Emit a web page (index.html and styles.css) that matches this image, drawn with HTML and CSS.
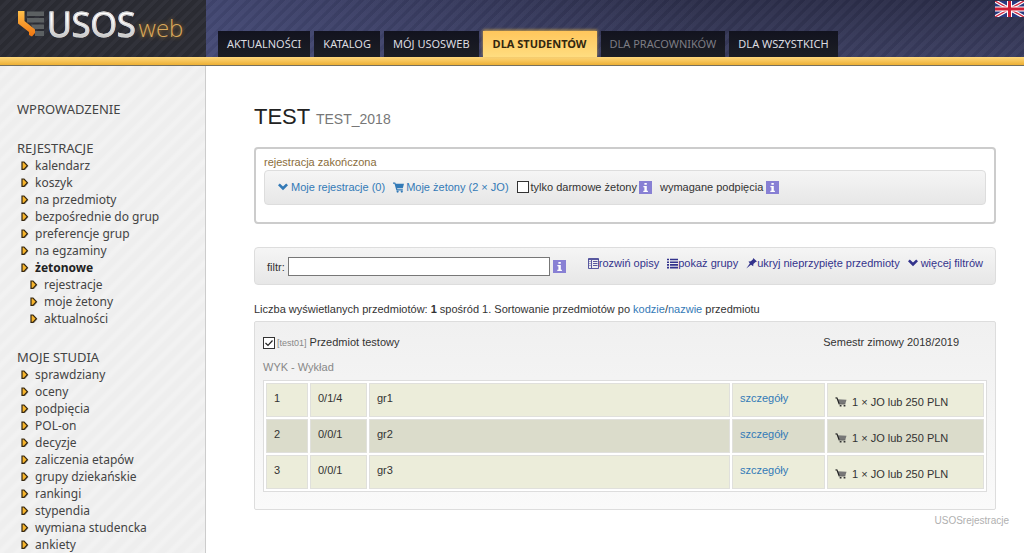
FILE: index.html
```html
<!DOCTYPE html>
<html lang="pl">
<head>
<meta charset="utf-8">
<title>USOSweb – TEST</title>
<link rel="stylesheet" href="styles.css">
</head>
<body>
<svg class="defs" aria-hidden="true">
  <defs>
    <linearGradient id="orange" x1="0" y1="0" x2="0" y2="1"><stop offset="0" stop-color="#ffc04a"/><stop offset="1" stop-color="#ef7410"/></linearGradient>
    <symbol id="chevron" viewBox="0 0 10 8"><path d="M0 2.2 1.8.5 5 3.6 8.2.5 10 2.2 5 7.2Z" fill="currentColor"/></symbol>
    <symbol id="cart" viewBox="0 0 11 11"><path d="M0 .5h2.2l.6 1.3H11L9.8 6.2H4.1l.3 1.1h5.4v1.1H3.4L1.5 1.7H0Z" fill="currentColor"/><circle cx="4.6" cy="9.6" r="1.1" fill="currentColor"/><circle cx="8.8" cy="9.6" r="1.1" fill="currentColor"/></symbol>
    <symbol id="cart-gray" viewBox="0 0 12 10"><path d="M2.6 2.2 11.5 2.8 10.200 7H4.2Z" fill="#777"/><path d="M.5.8 2 1l2.300 6.200" fill="none" stroke="#222" stroke-width="1.2"/><path d="M4 7h6.300" stroke="#666" stroke-width="1"/><path d="M4.7 8h1.8v1.6H4.7zM8.6 8h1.8v1.6H8.6z" fill="#333"/></symbol>
    <symbol id="details" viewBox="0 0 11 11"><path d="M.5.5h10v10H.5zM.5 1.5h10M3.5 2v8M5 3.5h4.5M5 5.5h4.5M5 7.5h4.5M1.5 3.5h1M1.5 5.5h1M1.5 7.5h1" fill="none" stroke="currentColor" stroke-opacity=".8"/></symbol>
    <symbol id="list" viewBox="0 0 11 10"><path d="M0 1h2M3 1h8M0 3.7h2M3 3.7h8M0 6.4h2M3 6.4h8M0 9.1h2M3 9.1h8" fill="none" stroke="currentColor" stroke-width="1.6"/></symbol>
    <symbol id="pin" viewBox="0 0 11 11"><path d="M7.2 0 11 3.6 9.6 4 7.4 6 7.2 8.3 5 6.7.3 10.6 3.8 5.5 2.5 3.5l2.4-.2L7 1.3Z" fill="currentColor"/></symbol>
    <symbol id="arrow" viewBox="0 0 8 10"><path d="M2 1.8h2.4L7.6 5 4.4 9H2Z" fill="#000" opacity=".25"/><path d="M1 1h2L6.4 4.7 3 8.4H1Z" fill="#f7b52c" stroke="#33250f" stroke-width="1.2"/></symbol>
    <symbol id="info" viewBox="0 0 13 13"><path d="M0 0h13v13H0z" fill="#8880d4"/><path d="M5.4 2h2.4v1.8H5.4zM4.4 5h3.4v4.8h1.1V11H4.3V9.8h1.1V6.2h-1z" fill="#fff"/></symbol>
  </defs>
</svg>

<header class="top">
  <a class="logo" href="#" aria-label="USOSweb">
    <svg class="logo-mark" viewBox="0 0 26 26" aria-hidden="true">
      <path d="M9 .5h17v4.500H9zM9 7h17v4.500H9zM13 13.500h13v4.500H15zM17 20h9v5h-9z" fill="#5c6062"/>
      <path d="M0 0h6.500v10L17 18.500V22l-3 3.500L11 24v-3L0 12.500Z" fill="url(#orange)"/>
    </svg>
    <span class="logo-usos">USOS</span><span class="logo-web">web</span>
  </a>
  <div class="top-right">
    <nav class="tabs">
      <a class="tab" href="#">AKTUALNOŚCI</a>
      <a class="tab" href="#">KATALOG</a>
      <a class="tab" href="#">MÓJ USOSWEB</a>
      <a class="tab tab-active" href="#">DLA STUDENTÓW</a>
      <a class="tab tab-muted" href="#">DLA PRACOWNIKÓW</a>
      <a class="tab" href="#">DLA WSZYSTKICH</a>
    </nav>
    <a class="flag" href="#" aria-label="English">
      <svg viewBox="0 0 29 16" aria-hidden="true">
        <path d="M0 0h29v16H0z" fill="#283a80"/>
        <path d="M0 0 29 16M29 0 0 16" stroke="#fff" stroke-width="3.600"/>
        <path d="M0 0 29 16M29 0 0 16" stroke="#d02840" stroke-width="1.300"/>
        <path d="M14.500 0v16M0 8h29" stroke="#fff" stroke-width="5"/>
        <path d="M14.500 0v16M0 8h29" stroke="#d01f35" stroke-width="3"/>
      </svg>
    </a>
  </div>
</header>

<div class="page">
  <nav class="sidebar">
    <section><a class="side-title" href="#">WPROWADZENIE</a></section>
    <section>
      <div class="side-title">REJESTRACJE</div>
      <ul>
        <li><svg><use href="#arrow"/></svg><a href="#">kalendarz</a></li>
        <li><svg><use href="#arrow"/></svg><a href="#">koszyk</a></li>
        <li><svg><use href="#arrow"/></svg><a href="#">na przedmioty</a></li>
        <li><svg><use href="#arrow"/></svg><a href="#">bezpośrednie do grup</a></li>
        <li><svg><use href="#arrow"/></svg><a href="#">preferencje grup</a></li>
        <li><svg><use href="#arrow"/></svg><a href="#">na egzaminy</a></li>
        <li class="current"><svg><use href="#arrow"/></svg><a href="#">żetonowe</a></li>
        <li class="sub"><svg><use href="#arrow"/></svg><a href="#">rejestracje</a></li>
        <li class="sub"><svg><use href="#arrow"/></svg><a href="#">moje żetony</a></li>
        <li class="sub"><svg><use href="#arrow"/></svg><a href="#">aktualności</a></li>
      </ul>
    </section>
    <section>
      <div class="side-title">MOJE STUDIA</div>
      <ul>
        <li><svg><use href="#arrow"/></svg><a href="#">sprawdziany</a></li>
        <li><svg><use href="#arrow"/></svg><a href="#">oceny</a></li>
        <li><svg><use href="#arrow"/></svg><a href="#">podpięcia</a></li>
        <li><svg><use href="#arrow"/></svg><a href="#">POL-on</a></li>
        <li><svg><use href="#arrow"/></svg><a href="#">decyzje</a></li>
        <li><svg><use href="#arrow"/></svg><a href="#">zaliczenia etapów</a></li>
        <li><svg><use href="#arrow"/></svg><a href="#">grupy dziekańskie</a></li>
        <li><svg><use href="#arrow"/></svg><a href="#">rankingi</a></li>
        <li><svg><use href="#arrow"/></svg><a href="#">stypendia</a></li>
        <li><svg><use href="#arrow"/></svg><a href="#">wymiana studencka</a></li>
        <li><svg><use href="#arrow"/></svg><a href="#">ankiety</a></li>
      </ul>
    </section>
  </nav>

  <main class="content">
    <h1>TEST <small>TEST_2018</small></h1>

    <section class="status">
      <div class="status-text">rejestracja zakończona</div>
      <div class="panel status-bar">
        <a class="with-icon" href="#"><svg class="i-chevron"><use href="#chevron"/></svg>Moje rejestracje (0)</a>
        <a class="with-icon tight" href="#"><svg class="i-small"><use href="#cart"/></svg>Moje żetony (2 × JO)</a>
        <span class="with-icon tight"><input type="checkbox" id="free"><label for="free">tylko darmowe żetony</label><svg class="i-info"><use href="#info"/></svg></span>
        <span class="with-icon">wymagane podpięcia<svg class="i-info"><use href="#info"/></svg></span>
      </div>
    </section>

    <section class="panel filters">
      <div class="filter">
        <label for="filter">filtr:</label>
        <input type="text" id="filter">
        <svg class="i-info"><use href="#info"/></svg>
      </div>
      <div class="filter-links">
        <a href="#"><svg class="i-small"><use href="#details"/></svg>rozwiń opisy</a>
        <a href="#"><svg class="i-small"><use href="#list"/></svg>pokaż grupy</a>
        <a href="#"><svg class="i-small"><use href="#pin"/></svg>ukryj nieprzypięte przedmioty</a>
        <a class="with-icon" href="#"><svg class="i-chevron"><use href="#chevron"/></svg>więcej filtrów</a>
      </div>
    </section>

    <p class="summary">Liczba wyświetlanych przedmiotów: <b>1</b> spośród 1. Sortowanie przedmiotów po <a href="#">kodzie</a>/<a href="#">nazwie</a> przedmiotu</p>

    <section class="course">
      <div class="course-head">
        <span class="course-name"><input type="checkbox" id="course" checked><label for="course"><span class="code">[test01]</span> Przedmiot testowy</label></span>
        <span>Semestr zimowy 2018/2019</span>
      </div>
      <div class="class-type">WYK - Wykład</div>
      <table class="groups">
        <colgroup><col class="c-no"><col class="c-count"><col><col class="c-link"><col class="c-price"></colgroup>
        <tbody>
          <tr><td>1</td><td>0/1/4</td><td>gr1</td><td><a href="#">szczegóły</a></td><td><div class="price"><svg><use href="#cart-gray"/></svg>1 × JO lub 250 PLN</div></td></tr>
          <tr><td>2</td><td>0/0/1</td><td>gr2</td><td><a href="#">szczegóły</a></td><td><div class="price"><svg><use href="#cart-gray"/></svg>1 × JO lub 250 PLN</div></td></tr>
          <tr><td>3</td><td>0/0/1</td><td>gr3</td><td><a href="#">szczegóły</a></td><td><div class="price"><svg><use href="#cart-gray"/></svg>1 × JO lub 250 PLN</div></td></tr>
        </tbody>
      </table>
    </section>
    <footer class="module">USOSrejestracje</footer>
  </main>
</div>
</body>
</html>
```

FILE: styles.css
```css
* { box-sizing: border-box; }

body {
  margin: 0;
  min-height: 100vh;
  display: flex;
  flex-direction: column;
  background: #fff;
  color: #333;
  font: 11px/16px "Liberation Sans", Arial, sans-serif;
}

a { color: #337ab7; text-decoration: none; }
svg { flex: none; display: block; }
.defs { position: absolute; width: 0; height: 0; }

/* Header */
.top {
  display: flex;
  border-bottom: 1px solid #77705c;
  background: linear-gradient(#ffd87c, #edb035) bottom / 100% 8px no-repeat;
  padding-bottom: 8px;
}

.logo {
  width: 206px;
  flex: none;
  display: flex;
  padding: 4px 0 0 18px;
  font-family: "Open Sans", "Noto Sans", sans-serif;
  background: repeating-linear-gradient(135deg, #2a2b32 0 4px, #31323a 5px 8px);
}
.logo-mark { width: 26px; height: 26px; margin: 7px 3px 0 0; }
.logo-usos {
  font-size: 34px;
  line-height: 40px;
  font-weight: 500;
  color: transparent;
  background: linear-gradient(#fff 30%, #aaa 80%);
  background-clip: text;
  -webkit-text-stroke: 1px #d4d4d4;
}
.logo-web {
  margin: 6px 0 0 3px;
  font-size: 24px;
  line-height: 36px;
  font-weight: 300;
  color: #d9a85c;
  text-shadow: 0 0 4px #a87420;
}

.top-right {
  flex: 1;
  height: 57px;
  display: flex;
  justify-content: space-between;
  background:
    repeating-linear-gradient(135deg, #ffffff06 0 4px, #0000000c 5px 8px),
    linear-gradient(90deg, #4c5283aa, #4c528300 60%),
    linear-gradient(#2c2e4a, #3b3e60);
}
.tabs {
  display: flex;
  align-items: flex-end;
  gap: 4px;
  padding-left: 12px;
  font: 11px/26px "Noto Sans", "Open Sans", sans-serif;
}
.tab {
  padding: 0 9px;
  background: linear-gradient(#12131f, #1c1e24);
  color: #dcdce0;
  white-space: nowrap;
}
.tab-active {
  padding: 0 10px;
  background: linear-gradient(#ffc65c, #ffdd80);
  color: #33270f;
  font-weight: bold;
  box-shadow: 0 -1px 3px #c9a04a;
}
.tab-muted { color: #7d7d84; }
.flag svg { width: 29px; height: 16px; margin-top: 1px; }

/* Sidebar */
.page { flex: 1; display: flex; }
.sidebar {
  width: 206px;
  flex: none;
  display: flex;
  flex-direction: column;
  gap: 22px;
  padding: 35px 0 0 17px;
  border-right: 1px solid #ccc;
  background: repeating-linear-gradient(135deg, #eeeeee 0 4px, #f2f2f2 7px 9px, #eeeeee 12px);
  font: 12px/17px "Noto Sans", "Open Sans", sans-serif;
}
.sidebar a, .side-title { display: block; color: #444; }
.sidebar .side-title { font-size: 13px; }
.sidebar ul { margin: 0; padding: 0 0 0 4px; list-style: none; }
.sidebar li { display: flex; align-items: center; gap: 6px; }
.sidebar li svg { width: 8px; height: 10px; }
.sidebar .sub { padding-left: 9px; }
.sidebar .current a { font-weight: bold; color: #222; }

/* Content */
.content { flex: 1; min-width: 0; padding: 36px 28px 0 48px; }
h1 { margin: 0; font-size: 22px; line-height: 30px; font-weight: normal; color: #222; }
h1 small { font-size: 14px; color: #777; }

.panel {
  border: 1px solid #ddd;
  border-radius: 4px;
  background: linear-gradient(#f5f5f5, #e7e7e7);
}
.status {
  margin-top: 13px;
  padding: 6px 8px 17px;
  border: 2px solid #ccc;
  border-radius: 4px;
}
.status-text { line-height: 15px; color: #8a6d3b; }
.status-bar { display: flex; align-items: center; gap: 8px; padding: 8px 13px 9px; }
.with-icon { display: flex; align-items: center; gap: 3px; }
.tight { gap: 2px; }
.i-chevron { width: 10px; height: 8px; }
.i-small { width: 11px; height: 11px; }
.i-info { width: 13px; height: 13px; }

input[type="checkbox"] {
  appearance: none;
  width: 12px;
  height: 12px;
  margin: 0;
  border: 1px solid #333;
  background: #fff;
}
input[type="checkbox"]:checked {
  background: #fff url("data:image/svg+xml,%3Csvg xmlns='http://www.w3.org/2000/svg' viewBox='0 0 10 10'%3E%3Cpath d='M1.500 5 4 7.500 8.500 2.500' fill='none' stroke='%23222' stroke-width='1.200'/%3E%3C/svg%3E");
}

.filters {
  display: flex;
  justify-content: space-between;
  margin-top: 23px;
  padding: 9px 12px 8px;
}
.filter { display: flex; align-items: center; gap: 3px; }
.filter input {
  width: 262px;
  height: 19px;
  padding: 1px 3px;
  border: 1px solid #777;
  background: #fff;
  font: inherit;
}
.filter-links { display: flex; gap: 8px; height: 16px; margin-top: -2px; }
.filter-links a { display: flex; align-items: center; color: #33338c; white-space: nowrap; }
.filter-links .with-icon { gap: 3px; }

.summary { margin: 16px 0 4px; }

.course {
  padding: 12px 8px 17px;
  border: 1px solid #ddd;
  border-radius: 2px;
  background: linear-gradient(#f0f0f0, #fafafa);
}
.course-head { display: flex; justify-content: space-between; padding-right: 28px; }
.course-name { display: flex; align-items: center; gap: 2px; }
.code { font-size: 9px; color: #888; }
.class-type { margin: 8px 0 5px; color: #888; }

.groups {
  width: 100%;
  table-layout: fixed;
  border: 1px solid #ddd;
  border-collapse: separate;
  border-spacing: 2px;
  background: #fff;
}
.groups td {
  height: 34px;
  padding: 7px 7px 0;
  border: 1px solid #e0e0dc;
  background: #ecedda;
  vertical-align: top;
  line-height: 14px;
}
.groups tr:nth-child(even) td { background: #dbdccb; }
.c-no { width: 42px; }
.c-count { width: 57px; }
.c-link { width: 93px; }
.c-price { width: 157px; }
.price { display: flex; align-items: center; gap: 5px; padding-top: 4px; }
.price svg { width: 12px; height: 10px; }

.module { margin: 3px -13px 0 0; text-align: right; font-size: 10px; color: #b0b0b0; }
```
